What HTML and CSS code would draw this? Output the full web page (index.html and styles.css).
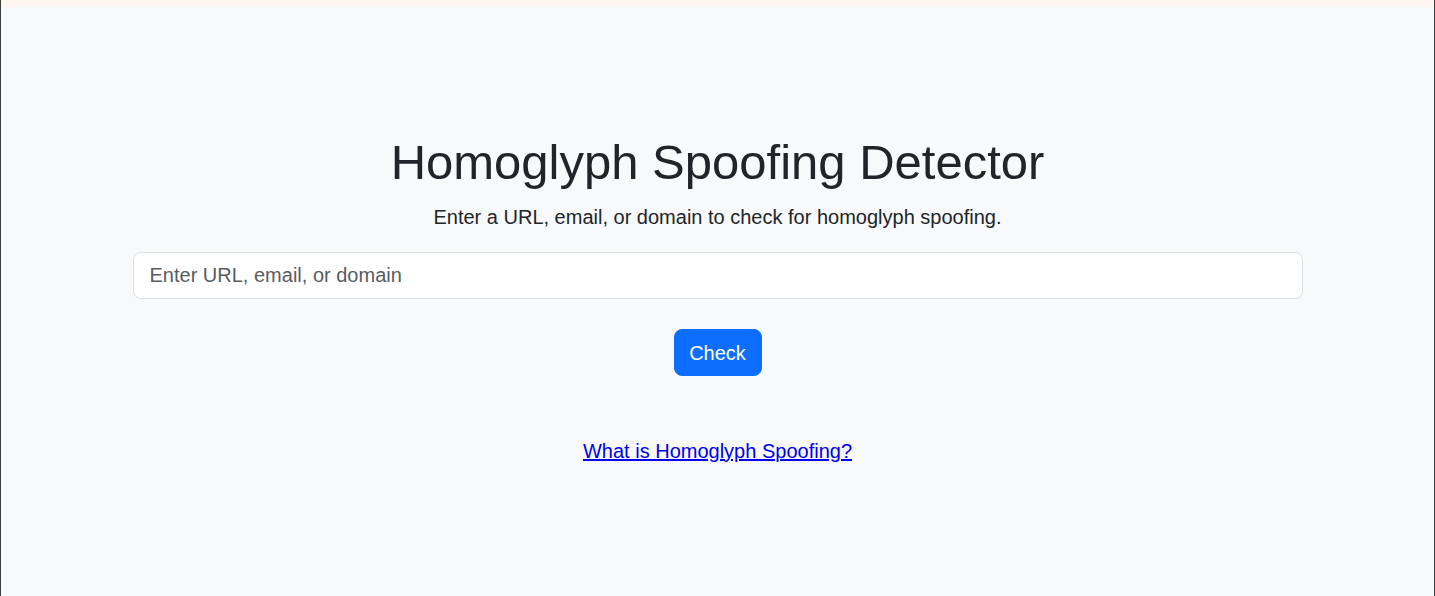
FILE: index.html
```html
<!DOCTYPE html>
<html lang="en">
<head>
<meta charset="utf-8">
<title>Homoglyph Spoofing Detector</title>
<link rel="stylesheet" href="styles.css">
</head>
<body>
<div class="frame">
  <div class="topbar"></div>
  <main class="container">
    <h1 class="title">Homoglyph Spoofing Detector</h1>
    <p class="lead">Enter a URL, email, or domain to check for homoglyph spoofing.</p>
    <form class="check-form">
      <input class="form-control" type="text" placeholder="Enter URL, email, or domain">
      <button class="btn-check" type="button">Check</button>
    </form>
    <div class="info">
      <a class="info-link" href="#">What is Homoglyph Spoofing?</a>
    </div>
  </main>
</div>
</body>
</html>
```

FILE: styles.css
```css
html, body {
  margin: 0;
  padding: 0;
  background: #f8f9fa;
}
body {
  font-family: "Liberation Sans", Arial, Helvetica, sans-serif;
  color: #212529;
}
.frame {
  box-sizing: border-box;
  min-height: 596px;
  border-left: 1px solid #3d3d3d;
  border-right: 1px solid #3d3d3d;
}
.topbar {
  height: 7px;
  background: #fff5f1;
}
.container {
  box-sizing: border-box;
  max-width: 1200px;
  margin: 0 auto;
  padding: 0 15px;
  text-align: center;
}
.title {
  margin: 126px 0 10px;
  font-size: 49px;
  font-weight: 400;
  line-height: 1.2;
}
.lead {
  margin: 0 0 20px;
  font-size: 20px;
  line-height: 1.5;
}
.check-form {
  display: flex;
  flex-direction: column;
  align-items: center;
  gap: 30px;
}
.form-control {
  box-sizing: border-box;
  width: 100%;
  height: 47px;
  padding: 8px 16px;
  font-family: inherit;
  font-size: 20px;
  color: #212529;
  background: #fff;
  border: 1px solid #dee2e6;
  border-radius: 8px;
  outline: none;
}
.form-control::placeholder {
  color: #595c5f;
}
.btn-check {
  box-sizing: border-box;
  width: 88px;
  height: 47px;
  padding: 8px 0;
  font-family: inherit;
  font-size: 20px;
  line-height: 1.5;
  color: #fff;
  background: #0d6efd;
  border: 1px solid #0d6efd;
  border-radius: 8px;
  cursor: pointer;
}
.info {
  margin-top: 60px;
  font-size: 20px;
  line-height: 1.5;
}
.info-link {
  color: #0000ee;
  text-decoration: underline;
}
```
